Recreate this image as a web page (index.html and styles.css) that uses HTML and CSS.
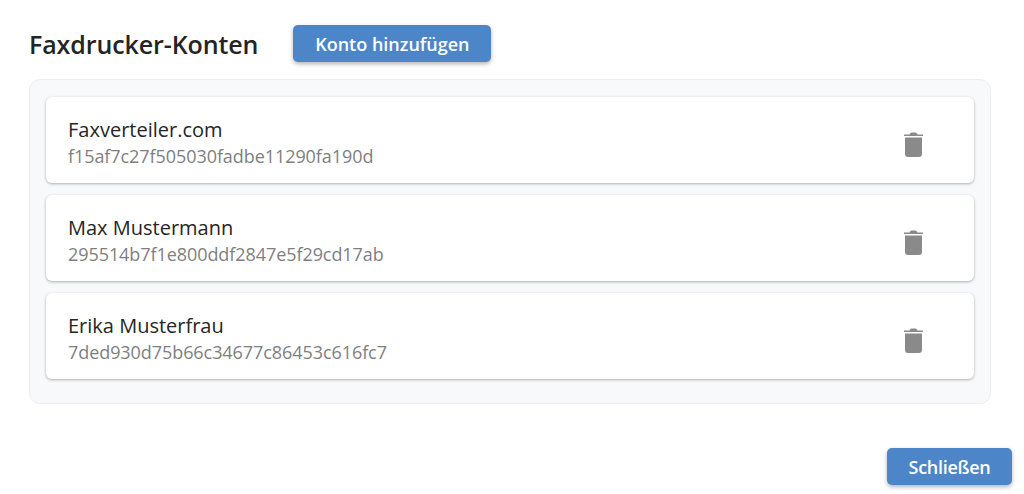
FILE: index.html
```html
<!DOCTYPE html>
<html lang="de">
  <head>
    <meta charset="UTF-8" />
    <title>Faxdrucker-Konten</title>
    <link rel="stylesheet" href="styles.css">
  </head>
  <body>
    <div class="dialog">
      <div class="header">
        <h1 class="title">Faxdrucker-Konten</h1>
        <button class="btn btn-add">Konto hinzufügen</button>
      </div>
      <div class="panel">
        <div class="card">
          <div class="info">
            <div class="name">Faxverteiler.com</div>
            <div class="token">f15af7c27f505030fadbe11290fa190d</div>
          </div>
          <svg class="trash" viewBox="0 0 19 25"><path d="M0 2.500h5.500q1-2 2-2h4q1 0 2 2H19V4H0zM1 5.500h17V22a3 3 0 0 1-3 3H4a3 3 0 0 1-3-3z"/></svg>
        </div>
        <div class="card">
          <div class="info">
            <div class="name">Max Mustermann</div>
            <div class="token">295514b7f1e800ddf2847e5f29cd17ab</div>
          </div>
          <svg class="trash" viewBox="0 0 19 25"><path d="M0 2.500h5.500q1-2 2-2h4q1 0 2 2H19V4H0zM1 5.500h17V22a3 3 0 0 1-3 3H4a3 3 0 0 1-3-3z"/></svg>
        </div>
        <div class="card">
          <div class="info">
            <div class="name">Erika Musterfrau</div>
            <div class="token">7ded930d75b66c34677c86453c616fc7</div>
          </div>
          <svg class="trash" viewBox="0 0 19 25"><path d="M0 2.500h5.500q1-2 2-2h4q1 0 2 2H19V4H0zM1 5.500h17V22a3 3 0 0 1-3 3H4a3 3 0 0 1-3-3z"/></svg>
        </div>
      </div>
      <div class="footer">
        <button class="btn btn-close">Schließen</button>
      </div>
    </div>
  </body>
</html>
```

FILE: styles.css
```css
* {
  margin: 0;
  padding: 0;
  box-sizing: border-box;
}
html,
body {
  height: 100%;
  overflow: hidden;
}
body {
  background-color: #fff;
  font-family: "Open Sans", "Noto Sans", sans-serif;
}
.dialog {
  height: 494px;
  padding: 25px 12px 9px 29px;
  display: flex;
  flex-direction: column;
}
.header {
  display: flex;
  align-items: center;
  gap: 35px;
  height: 37px;
  margin-bottom: 17px;
}
.title {
  font-size: 25px;
  line-height: 40px;
  font-weight: 600;
  color: #242424;
  letter-spacing: -0.1px;
}
.btn {
  border: none;
  border-radius: 5px;
  background-color: #4c86c8;
  color: #fff;
  font-family: inherit;
  font-size: 18px;
  font-weight: 600;
  height: 37px;
  box-shadow: 0 2px 4px rgba(0, 0, 0, 0.3);
}
.btn-add {
  width: 198px;
}
.btn-close {
  width: 125px;
  letter-spacing: -0.3px;
}
.panel {
  width: 962px;
  height: 325px;
  padding: 17px 16px;
  background-color: #f8f9fb;
  border: 1px solid #eceef1;
  border-radius: 11px;
  display: flex;
  flex-direction: column;
  gap: 12px;
}
.card {
  height: 86px;
  background-color: #fff;
  border-radius: 6px;
  box-shadow: 0 1px 3px rgba(0, 0, 0, 0.3);
  padding: 0 51px 0 22px;
  display: flex;
  align-items: center;
  justify-content: space-between;
}
.info {
  margin-top: 5px;
}
.name {
  font-size: 20px;
  line-height: 26px;
  color: #262626;
}
.token {
  font-size: 18px;
  line-height: 25px;
  margin-top: 1px;
  color: #7f7f7f;
  letter-spacing: -0.07px;
}
.trash {
  width: 19px;
  height: 25px;
  margin-top: 8px;
  fill: #8a8a8a;
}
.footer {
  margin-top: auto;
  display: flex;
  justify-content: flex-end;
}
```
